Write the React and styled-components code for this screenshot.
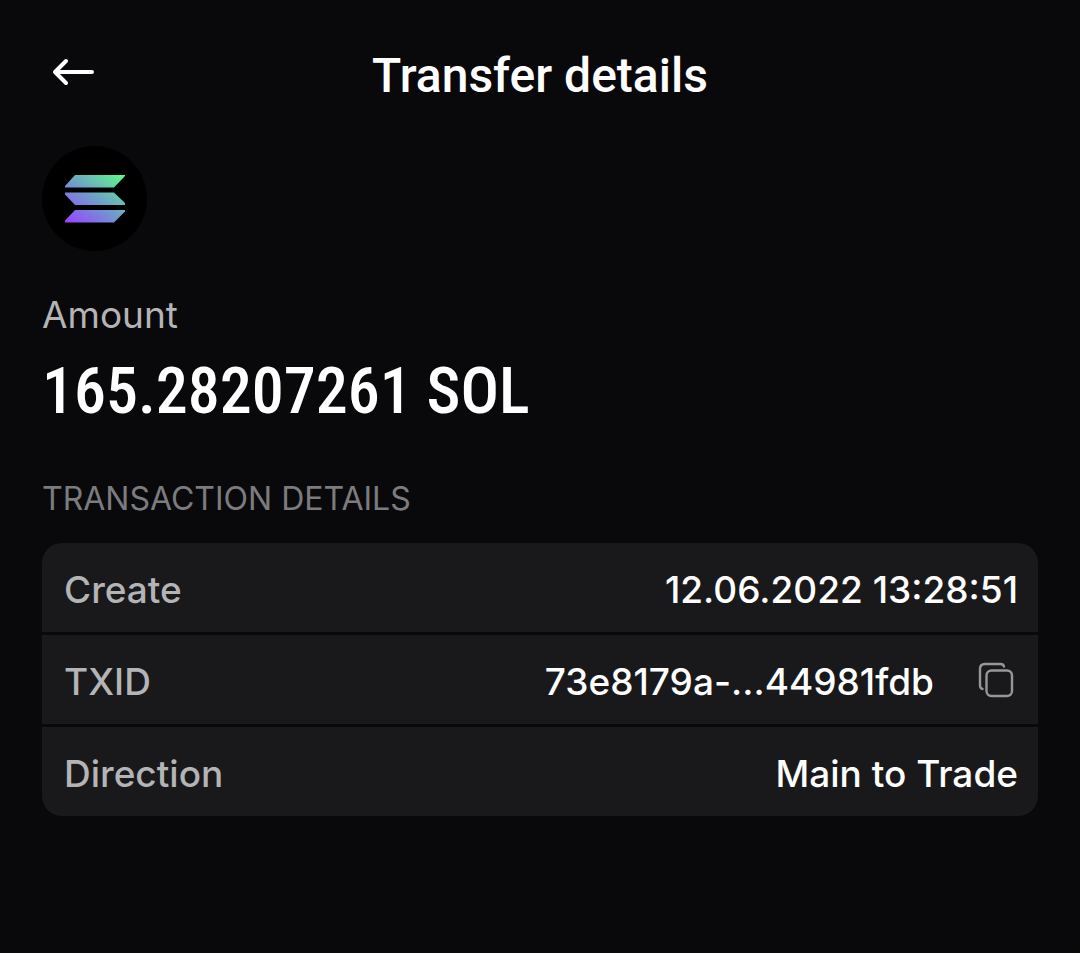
import React from "react";
import styled, { createGlobalStyle } from "styled-components";

const GlobalStyle = createGlobalStyle`
  * { box-sizing: border-box; }
  body {
    margin: 0;
    background: #09090b;
    color: #ffffff;
    font-family: Inter, "Liberation Sans", sans-serif;
  }
`;

const Screen = styled.div`
  min-height: 100vh;
  padding: 40px 42px;
`;

const Header = styled.header`
  display: grid;
  grid-template-columns: 62px 1fr 62px;
  align-items: start;
  height: 68px;
`;

const IconButton = styled.button`
  display: flex;
  align-items: center;
  justify-content: center;
  width: ${({ $width }) => $width}px;
  height: ${({ $height }) => $height}px;
  padding: 0;
  border: 0;
  background: none;
  color: ${({ $color }) => $color};
  cursor: pointer;
`;

const Title = styled.h1`
  margin: 0;
  font: 500 48px/72px Roboto, sans-serif;
  text-align: center;
`;

const CoinBadge = styled.div`
  display: flex;
  align-items: center;
  justify-content: center;
  width: 105px;
  height: 105px;
  margin-top: 38px;
  border-radius: 50%;
  background: #000000;
`;

const AmountLabel = styled.p`
  margin: 40px 0 0;
  color: #b4b4b6;
  font-size: 37px;
  line-height: 48px;
`;

const AmountValue = styled.p`
  margin: 13px 0 0;
  font: 500 64px/80px "Roboto Condensed", Roboto, sans-serif;
`;

const SectionTitle = styled.h2`
  margin: 47px 0 0;
  color: #7c7c7f;
  font-weight: 400;
  font-size: 32px;
  line-height: 40px;
`;

const DetailList = styled.dl`
  display: flex;
  flex-direction: column;
  gap: 3px;
  margin: 24px 0 0;
  border-radius: 20px;
  overflow: hidden;
`;

const DetailRow = styled.div`
  display: flex;
  align-items: center;
  justify-content: space-between;
  height: 89px;
  padding: 4px 20px 0 22px;
  background: #19191b;
  font-weight: 500;
  font-size: 37px;
  line-height: 48px;
`;

const DetailLabel = styled.dt`
  color: #b4b4b6;
`;

const DetailValue = styled.dd`
  display: flex;
  align-items: flex-start;
  gap: 40px;
  margin: 0;
`;

const BackIcon = () => (
  <svg width="44" height="28" viewBox="0 0 44 28" fill="none" stroke="currentColor" strokeWidth="4" strokeLinecap="round" strokeLinejoin="round" aria-hidden="true">
    <path d="M41 14H4M15 3L4 14L15 25" />
  </svg>
);

const SolanaLogo = () => (
  <svg width="60" height="48" viewBox="0 0 60 48" role="img" aria-label="Solana">
    <defs>
      <linearGradient id="sol" gradientUnits="userSpaceOnUse" x1="10" y1="52" x2="50" y2="-4">
        <stop offset="0" stopColor="#9945ff" />
        <stop offset="0.5" stopColor="#6f9dcb" />
        <stop offset="1" stopColor="#5ff58c" />
      </linearGradient>
    </defs>
    <path fill="url(#sol)" d="M10 0H60V1L49 12.500H0V11ZM0 17.500H49L60 28V30H10L0 19.500ZM10 35H60V36.500L49 47.500H0V45.500Z" />
  </svg>
);

const CopyIcon = () => (
  <svg width="36" height="36" viewBox="0 0 36 36" fill="none" stroke="currentColor" strokeWidth="2.400" strokeLinecap="round" aria-hidden="true">
    <rect x="8.500" y="8.500" width="25.500" height="25.500" rx="5" />
    <path d="M26 4.500C25.500 2.500 24.500 2 22.500 2H7C3.500 2 2 3.500 2 7V23C2 25 2.500 26.500 4.500 27" />
  </svg>
);

const Detail = ({ label, children }) => (
  <DetailRow>
    <DetailLabel>{label}</DetailLabel>
    <DetailValue>{children}</DetailValue>
  </DetailRow>
);

export default function App() {
  return (
    <Screen>
      <GlobalStyle />
      <Header>
        <IconButton type="button" aria-label="Back" $width={62} $height={64} $color="#ffffff"><BackIcon /></IconButton>
        <Title>Transfer details</Title>
      </Header>
      <main>
        <CoinBadge><SolanaLogo /></CoinBadge>
        <AmountLabel>Amount</AmountLabel>
        <AmountValue>165.28207261 SOL</AmountValue>
        <SectionTitle>TRANSACTION DETAILS</SectionTitle>
        <DetailList>
          <Detail label="Create">12.06.2022 13:28:51</Detail>
          <Detail label="TXID">
            73e8179a-...44981fdb
            <IconButton type="button" aria-label="Copy TXID" $width={44} $height={44} $color="#97979b"><CopyIcon /></IconButton>
          </Detail>
          <Detail label="Direction">Main to Trade</Detail>
        </DetailList>
      </main>
    </Screen>
  );
}
